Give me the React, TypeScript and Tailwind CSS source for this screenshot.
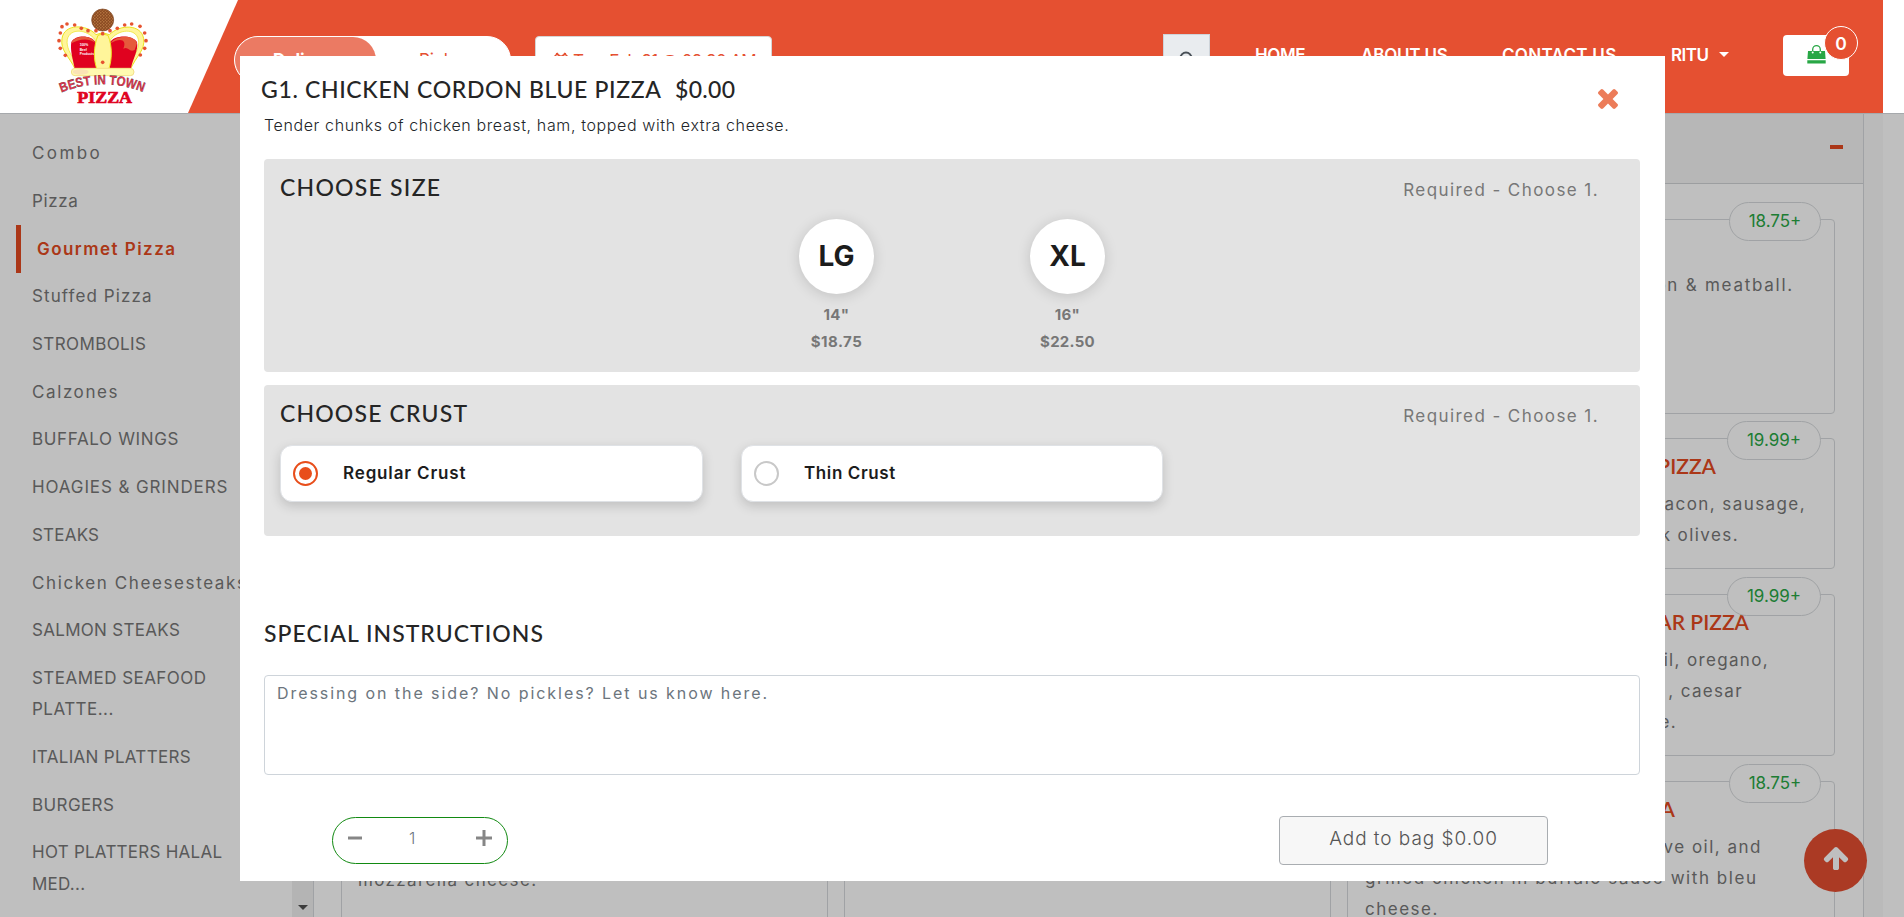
import type { ReactNode } from "react";

const categories = [
  { lines: ["Combo"], cls: "tracking-[2.4px]" },
  { lines: ["Pizza"], cls: "tracking-[0.6px]" },
  { lines: ["Gourmet Pizza"], cls: "tracking-[1.46px]", active: true },
  { lines: ["Stuffed Pizza"], cls: "tracking-[1.1px]" },
  { lines: ["STROMBOLIS"], cls: "tracking-[0.4px]" },
  { lines: ["Calzones"], cls: "tracking-[1.6px]" },
  { lines: ["BUFFALO WINGS"], cls: "tracking-[0.65px]" },
  { lines: ["HOAGIES & GRINDERS"], cls: "tracking-[0.88px]" },
  { lines: ["STEAKS"], cls: "tracking-[0.2px]" },
  { lines: ["Chicken Cheesesteaks"], cls: "tracking-[1.6px]" },
  { lines: ["SALMON STEAKS"], cls: "tracking-[0.3px]" },
  { lines: ["STEAMED SEAFOOD", "PLATTE..."], cls: "tracking-[0.46px]" },
  { lines: ["ITALIAN PLATTERS"], cls: "tracking-[0.3px]" },
  { lines: ["BURGERS"], cls: "tracking-[0.4px]" },
  { lines: ["HOT PLATTERS HALAL", "MED..."], cls: "tracking-[0.25px]" },
];

type Line = { text: string; cls: string };
type Pizza = { price: string; badge: string; box: string; title?: Line; lines: Line[] };

const pizzas: Pizza[] = [
  {
    price: "18.75+",
    badge: "w-[92px]",
    box: "h-[195px] mb-[24px]",
    lines: [{ text: "bacon & meatball.", cls: "w-[429px] text-right tracking-[1.75px]" }],
  },
  {
    price: "19.99+",
    badge: "w-[94px]",
    box: "h-[131px] mb-[25px]",
    title: { text: "PIZZA", cls: "w-[351px]" },
    lines: [
      { text: "bacon, sausage,", cls: "w-[441px] text-right tracking-[1.42px]" },
      { text: "black olives.", cls: "w-[374px] text-right tracking-[1.42px]" },
    ],
  },
  {
    price: "19.99+",
    badge: "w-[94px]",
    box: "h-[162px] mb-[25px]",
    title: { text: "CAESAR PIZZA", cls: "w-[384px]" },
    lines: [
      { text: "olive oil, oregano,", cls: "w-[404px] text-right tracking-[1.34px]" },
      { text: ", caesar", cls: "w-[378px] text-right tracking-[1.34px]" },
      { text: "cheese.", cls: "w-[312px] text-right tracking-[1.34px]" },
    ],
  },
  {
    price: "18.75+",
    badge: "w-[92px]",
    box: "h-[200px]",
    title: { text: "PIZZA", cls: "w-[310px]" },
    lines: [
      { text: "olive oil, and", cls: "w-[397px] text-right tracking-[1.5px]" },
      { text: "grilled chicken in buffalo sauce with bleu", cls: "tracking-[1.55px]" },
      { text: "cheese.", cls: "tracking-[1.5px]" },
    ],
  },
];

const dots = [
  [57, 122], [61, 99], [66, 80], [81, 72], [104, 75], [124, 85], [144, 92], [168, 92],
  [210, 92], [232, 85], [254, 75], [275, 72], [300, 79], [314, 99], [318, 122], [314, 145],
  [301, 165], [61, 145], [76, 166], [188, 101], [188, 187],
];

function Logo() {
  return (
    <svg viewBox="0 0 390 342" className="ml-10 h-[114px] w-[130px]">
      <defs>
        <path id="arc" d="M64 278 Q188 228 314 278" />
        <pattern id="crust" width="9" height="9" patternUnits="userSpaceOnUse">
          <rect width="9" height="9" fill="#8a4a22" />
          <circle cx="2.5" cy="2.5" r="2" fill="#d99a5b" />
          <circle cx="7" cy="6.5" r="1.6" fill="#c98748" />
        </pattern>
      </defs>
      <path d="M106 208 C88 170 60 150 66 116 C72 70 140 72 168 104 L188 98 L208 104 C240 72 304 72 311 116 C316 150 288 170 271 208 Z" fill="#fff59a" stroke="#ece31f" strokeWidth="3" />
      <path d="M106 190 C92 160 78 142 82 118 C90 84 140 86 166 120 V200 H106 Z" fill="#fff" stroke="#ece31f" strokeWidth="2" />
      <path d="M271 190 C286 160 300 142 295 118 C287 84 236 86 211 120 V200 H271 Z" fill="#fff" stroke="#ece31f" strokeWidth="2" />
      <path d="M104 204 C98 176 90 150 94 126 C106 104 154 104 168 128 V204 Z" fill="#e0021f" />
      <path d="M273 204 C279 176 296 150 291 126 C276 104 223 104 209 128 V204 Z" fill="#e0021f" />
      <path d="M94 130 C100 106 152 102 166 128 C142 112 118 118 94 130 Z" fill="#e65a3c" />
      <path d="M291 130 C285 106 232 102 211 130 C240 112 262 118 250 146 C266 138 266 158 284 150 Z" fill="#e65a3c" />
      <path d="M174 106 Q188 98 204 106 C218 140 216 180 206 208 H171 C160 180 160 140 174 106 Z" fill="#fff59a" stroke="#ece31f" strokeWidth="3" />
      <rect x="94" y="205" width="188" height="22" rx="11" fill="#fffab0" stroke="#f4e08a" strokeWidth="3" />
      <ellipse cx="122" cy="216" rx="24" ry="8" fill="#fbe3b5" />
      <circle cx="188" cy="60" r="33" fill="url(#crust)" stroke="#7a4220" strokeWidth="2" />
      {dots.map(([x, y]) => (
        <circle key={`${x}-${y}`} cx={x} cy={y} r="5.5" fill="#e65330" />
      ))}
      <g fill="#fff" fontFamily="Liberation Sans" fontWeight="700" fontSize="10">
        <text x="119" y="138">100%</text>
        <text x="119" y="152">Beef</text>
        <text x="119" y="166">Products</text>
      </g>
      <text fontFamily="Liberation Sans" fontWeight="700" fontSize="40" fill="#f0304a" stroke="#3a3a3a" strokeWidth="1">
        <textPath href="#arc" textLength="252" lengthAdjust="spacingAndGlyphs">BEST IN TOWN</textPath>
      </text>
      <text x="112" y="309" fontFamily="Liberation Serif" fontWeight="700" fontSize="48" fill="#e0021f" stroke="#e0021f" strokeWidth="2" textLength="164" lengthAdjust="spacingAndGlyphs">
        PIZZA
      </text>
    </svg>
  );
}

function Header() {
  return (
    <header className="relative z-10 flex h-[113px] w-[1883px] shrink-0 items-start whitespace-nowrap bg-[#e55031] font-['Inter',sans-serif] text-[17px] font-semibold text-white">
      <div className="h-[113px] w-[238px] shrink-0 bg-white [clip-path:polygon(0_0,238px_0,188px_113px,0_113px)]">
        <Logo />
      </div>
      <div className="-ml-[4px] mt-9 flex h-12 w-[277px] shrink-0 rounded-full border border-white bg-white">
        <div className="w-[141px] rounded-full bg-[#eb7a63] pl-[38px] pt-[8px] text-[17px] font-bold leading-[30px]">Delivery</div>
        <div className="pl-[43px] pt-[8px] font-normal leading-[30px] text-[#e55031]">Pickup</div>
      </div>
      <div className="ml-6 mt-9 flex h-12 w-[237px] shrink-0 rounded border border-[#d5d5d5] bg-white pl-[17px] pt-[9px] font-normal leading-[30px] tracking-[-0.6px] text-[#e55031]">
        <svg viewBox="0 0 16 16" className="mr-1 mt-[6px] h-4 w-4 fill-none stroke-[#e55031] stroke-[1.5]">
          <circle cx="8" cy="9" r="5" />
          <path d="M1 5 L5 1 M3 1.5 L7 4 M15 5 L11 1 M13 1.5 L9 4 M8 6 V9 H10" />
        </svg>
        Tue, Feb 21 @ 08:30 AM
      </div>
      <div className="ml-[391px] mt-[34px] h-12 w-[47px] shrink-0 border border-[#ced4da] bg-[#e9ecef] pl-[15px] pt-4">
        <svg viewBox="0 0 16 16" className="h-4 w-4 fill-none stroke-[#495057] stroke-2">
          <circle cx="7" cy="7" r="5.5" />
          <path d="M11 11 L15.5 15.5" />
        </svg>
      </div>
      <nav className="ml-[45px] mt-10 flex leading-[30px]">
        <span className="w-[106px] tracking-[-0.4px]">HOME</span>
        <span className="w-[141px] tracking-[-0.2px]">ABOUT US</span>
        <span className="w-[169px] tracking-[0.3px]">CONTACT US</span>
        <span className="flex w-[112px] tracking-[-0.5px]">
          <span className="w-[48px]">RITU</span>
          <svg viewBox="0 0 10 5" className="mt-3 h-[5px] w-[10px] fill-white">
            <path d="M0 0 H10 L5 5 Z" />
          </svg>
        </span>
      </nav>
      <div className="relative mt-[35px] h-[41px] w-[66px] rounded bg-white">
        <svg viewBox="0 0 19 19" className="ml-6 mt-[10px] h-[19px] w-[19px]">
          <path d="M5.7 8 V4.5 A3.8 3.8 0 0 1 13.3 4.5 V8" fill="none" stroke="#28a745" strokeWidth="1.3" />
          <path d="M1 6 H18 L18.6 14 H0.4 Z M0.3 15.3 H18.7 V18.6 H0.3 Z" fill="#28a745" />
          <circle cx="5.7" cy="7.6" r="1" fill="#fff" />
          <circle cx="13.3" cy="7.6" r="1" fill="#fff" />
        </svg>
        <span className="absolute -top-[9px] left-[41px] flex h-[34px] w-[34px] items-center justify-center rounded-full border border-white bg-[#e55031] pt-[2px] text-[17.5px]">0</span>
      </div>
    </header>
  );
}

function PizzaCard({ pizza }: { pizza: Pizza }) {
  return (
    <article className={`relative rounded border border-[#d6d9dc] pl-[17px] pt-[11px] ${pizza.box}`}>
      <h4 className={`h-[31px] text-right font-['Lato',sans-serif] text-[21px] font-semibold leading-[31px] text-[#e44a20] ${pizza.title?.cls ?? ""}`}>
        {pizza.title?.text}
      </h4>
      <div className="mt-[8px] leading-[31.2px] text-[#777]">
        {pizza.lines.map((l) => (
          <p key={l.text} className={`whitespace-nowrap ${l.cls}`}>
            {l.text}
          </p>
        ))}
      </div>
      <span className={`absolute -top-[18px] right-[13px] flex h-[39px] items-center justify-center rounded-full border border-[#d6d9dc] bg-white text-[17px] text-[#28a745] ${pizza.badge}`}>
        {pizza.price}
      </span>
    </article>
  );
}

function Menu() {
  return (
    <main className="flex h-[804px] overflow-hidden border-t border-[#dee2e6] bg-white font-['Inter',sans-serif] text-[17px] text-[#777]">
      <aside className="w-[292px] shrink-0 overflow-hidden pt-[16px]">
        {categories.map((c) => (
          <div
            key={c.lines[0]}
            className={`ml-4 border-l-[5px] py-[8.25px] leading-[31.2px] ${
              c.active ? "border-[#e44a20] pl-4 font-semibold text-[#e44a20]" : "border-transparent pl-[11px]"
            } ${c.cls}`}
          >
            {c.lines.map((l) => (
              <p key={l} className="whitespace-nowrap">
                {l}
              </p>
            ))}
          </div>
        ))}
      </aside>
      <div className="flex w-[21px] shrink-0 items-end justify-center bg-[#f1f1f1] pb-[7px]">
        <svg viewBox="0 0 10 5" className="h-[5px] w-[10px] fill-[#505050]">
          <path d="M0 0 H10 L5 5 Z" />
        </svg>
      </div>
      <section className="w-[1551px] shrink-0 border-x border-[#d6d9dc]">
        <div className="flex h-[70px] items-center justify-end border-b border-[#d0d3d6] bg-[#f5f5f5] pr-5 pb-1">
          <span className="h-[4px] w-[13px] bg-[#e44a20]" />
        </div>
        <div className="grid grid-cols-[487px_487px_488px] gap-x-4 pl-[27px] pt-[35px]">
          <article className="flex h-[760px] items-start rounded border border-[#d6d9dc] pl-4 pt-[648px] tracking-[1.35px]">mozzarella cheese.</article>
          <article className="h-[760px] rounded border border-[#d6d9dc]" />
          <div>
            {pizzas.map((p, i) => (
              <PizzaCard key={i} pizza={p} />
            ))}
          </div>
        </div>
      </section>
      <div className="w-[19px] shrink-0 bg-[#f8f8f8]" />
    </main>
  );
}

function Heading({ children, cls }: { children: ReactNode; cls: string }) {
  return <h3 className={`font-['Lato',sans-serif] text-[23px] font-medium leading-8 text-[#252525] ${cls}`}>{children}</h3>;
}

function Required() {
  return <span className="mr-[41px] mt-[3px] text-[17px] leading-8 tracking-[1.42px] text-[#777]">Required - Choose 1.</span>;
}

function Size({ name, inches, price, cls }: { name: string; inches: string; price: string; cls: string }) {
  return (
    <div className="flex w-[75px] flex-col items-center text-[15px] font-bold leading-[27px] text-[#777]">
      <div className="mb-[7px] flex h-[75px] w-[75px] items-center justify-center rounded-full bg-white text-[28px] font-bold text-[#1c1c1c] shadow-[0_2px_14px_rgba(0,0,0,0.15)]">
        {name}
      </div>
      <p className="tracking-[0.3px]">{inches}</p>
      <p className={cls}>{price}</p>
    </div>
  );
}

function Crust({ name, checked, cls }: { name: string; checked?: boolean; cls: string }) {
  return (
    <div className={`flex h-[57px] items-center rounded-xl border border-[#dfe2e6] bg-white pl-3 text-[17px] font-semibold text-[#1c1c1c] shadow-[0_4px_12px_rgba(0,0,0,0.16)] ${cls}`}>
      <span className={`flex h-[25px] w-[25px] items-center justify-center rounded-full border-2 ${checked ? "border-[#e84e1b]" : "border-[#c8c8c8]"}`}>
        {checked && <span className="mr-px h-[13px] w-[13px] rounded-full bg-[#e84e1b]" />}
      </span>
      <span className="ml-[25px]">{name}</span>
    </div>
  );
}

function Modal() {
  return (
    <div className="absolute left-[240px] top-14 z-20 h-[825px] w-[1425px] bg-white pl-6 pr-[25px] pt-[17px] font-['Inter',sans-serif]">
      <div className="-ml-[3px] flex">
        <Heading cls="w-[414px] tracking-[0.65px]">G1. CHICKEN CORDON BLUE PIZZA</Heading>
        <Heading cls="tracking-[0.3px]">$0.00</Heading>
      </div>
      <svg viewBox="110 366 1188 1188" className="absolute right-[47px] top-[33px] h-5 w-5 fill-[#ec7c59]">
        <path d="M1298 1322q0 40-28 68l-136 136q-28 28-68 28t-68-28l-294-294-294 294q-28 28-68 28t-68-28l-136-136q-28-28-28-68t28-68l294-294-294-294q-28-28-28-68t28-68l136-136q28-28 68-28t68 28l294 294 294-294q28-28 68-28t68 28l136 136q28 28 28 68t-28 68l-294 294 294 294q28 28 28 68z" />
      </svg>
      <p className="mt-[8px] text-[16px] font-light leading-6 tracking-[0.62px] text-[#212529]">
        Tender chunks of chicken breast, ham, topped with extra cheese.
      </p>

      <section className="mt-[22px] h-[213px] rounded bg-[#e3e3e3] pl-4 pt-3">
        <div className="flex h-8 items-start justify-between">
          <Heading cls="tracking-[1.24px]">CHOOSE SIZE</Heading>
          <Required />
        </div>
        <div className="-ml-4 mt-4 flex justify-center gap-[156px]">
          <Size name="LG" inches={'14"'} price="$18.75" cls="tracking-[0.5px]" />
          <Size name="XL" inches={'16"'} price="$22.50" cls="tracking-[0.25px]" />
        </div>
      </section>

      <section className="mt-[13px] h-[151px] rounded bg-[#e3e3e3] pl-4 pt-3">
        <div className="flex h-8 items-start justify-between">
          <Heading cls="tracking-[1.16px]">CHOOSE CRUST</Heading>
          <Required />
        </div>
        <div className="mt-[16px] flex gap-[38px]">
          <Crust name="Regular Crust" checked cls="w-[423px] tracking-[0.85px]" />
          <Crust name="Thin Crust" cls="w-[422px] tracking-[0.6px]" />
        </div>
      </section>

      <Heading cls="mt-[81px] tracking-[1.02px]">SPECIAL INSTRUCTIONS</Heading>
      <textarea
        placeholder="Dressing on the side? No pickles? Let us know here."
        className="mt-[26px] block h-[100px] w-full resize-none rounded border border-[#ced4da] px-3 pt-[5px] text-[16px] leading-6 tracking-[1.93px] placeholder:text-[#6c757d]"
      />
      <div className="mt-[41px] flex items-center justify-between pl-[68px] pr-[92px]">
        <div className="flex h-[47px] w-[176px] items-start rounded-full border border-[#128a12] pl-[15px] pt-[10px] text-[#868686]">
          <svg viewBox="0 0 14 18" className="h-[18px] w-[14px] stroke-current stroke-3">
            <path d="M0 10 H14" />
          </svg>
          <span className="ml-[47px] mt-[-2px] w-4 text-[16px] font-light leading-6 text-[#6c757d]">1</span>
          <svg viewBox="0 0 16 18" className="ml-[51px] h-[18px] w-4 stroke-current stroke-3">
            <path d="M0 10 H16 M8 2 V18" />
          </svg>
        </div>
        <button className="h-[49px] w-[269px] rounded border border-[#a9adb1] bg-[#f7f7f7] pb-[2px] text-[19px] font-light tracking-[0.95px] text-[#555]">
          Add to bag $0.00
        </button>
      </div>
    </div>
  );
}

export default function App() {
  return (
    <div className="relative flex h-[917px] w-[1904px] flex-col overflow-hidden bg-white">
      <Header />
      <Menu />
      <div className="absolute bottom-[25px] right-[37px] flex h-[63px] w-[63px] items-center justify-center rounded-full bg-[#e44e31]">
        <svg viewBox="-64 128 1792 1600" className="mb-1 h-[25px] w-[28px] fill-white">
          <path d="M1611 971q0 51-37 90l-75 75q-38 38-91 38-54 0-90-38l-294-293v704q0 52-37.5 84.5t-90.5 32.5h-128q-53 0-90.5-32.5t-37.5-84.5v-704l-294 293q-36 38-90 38t-90-38l-75-75q-38-38-38-90 0-53 38-91l651-651q35-37 90-37 54 0 91 37l651 651q37 39 37 91z" />
        </svg>
      </div>
      <div className="absolute inset-x-0 bottom-0 top-[113px] bg-black/25" />
      <Modal />
    </div>
  );
}
